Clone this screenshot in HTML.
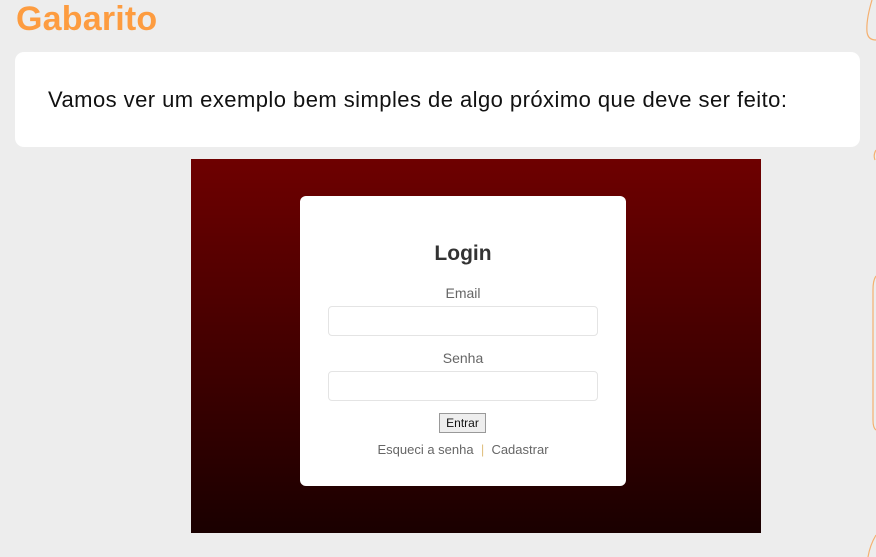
<!DOCTYPE html>
<html><head><style>
*{margin:0;padding:0;box-sizing:border-box}
body{width:876px;height:557px;background:#ededed;position:relative;overflow:hidden;font-family:"Liberation Sans",sans-serif}
.t{position:absolute;left:16px;top:-1px;font-size:34px;font-weight:bold;color:#fd9c40;line-height:40px;letter-spacing:0.2px}
.card{position:absolute;left:15px;top:52px;width:845px;height:95px;background:#fff;border-radius:9px}
.card p{position:absolute;left:33px;top:35px;font-size:22px;color:#111;letter-spacing:0.45px}
.img{position:absolute;left:191px;top:159px;width:570px;height:374px;background:linear-gradient(#6e0000,#1a0000)}
.box{position:absolute;left:109px;top:37px;width:326px;height:290px;background:#fff;border-radius:6px;text-align:center;color:#666}
.box h1{position:absolute;top:46px;width:100%;font-size:21px;color:#333}
.lbl{position:absolute;width:100%;font-size:14px}
.in{position:absolute;left:28px;width:270px;height:30px;border:1px solid #e4e4e4;border-radius:4px}
.btn{position:absolute;left:139px;top:217px;width:47px;height:20px;border:1px solid #999;background:#eee;font-size:12px;color:#111;line-height:18px}
.lk{position:absolute;top:246px;width:100%;font-size:13px;color:#666}
</style></head><body>
<div class="t">Gabarito</div>
<div class="card"><p>Vamos ver um exemplo bem simples de algo próximo que deve ser feito:</p></div>
<div class="img"><div class="box">
<h1>Login</h1>
<div class="lbl" style="top:89px">Email</div>
<div class="in" style="top:110px"></div>
<div class="lbl" style="top:154px">Senha</div>
<div class="in" style="top:175px"></div>
<div class="btn">Entrar</div>
<div class="lk">Esqueci a senha &nbsp;<span style="color:#e0c080">|</span>&nbsp; Cadastrar</div>
</div></div>
<svg style="position:absolute;left:840px;top:0" width="36" height="557" fill="none" stroke="#f5b070" stroke-width="1.2">
<path d="M32 0 Q26 20 27 32 Q28 40 36 40"/>
<path d="M36 150 Q33 155 35 160"/>
<path d="M36 276 Q33 280 33 290 L33 420 Q33 428 36 430"/>
<path d="M36 535 Q30 545 28 557"/>
</svg>
</body></html>
